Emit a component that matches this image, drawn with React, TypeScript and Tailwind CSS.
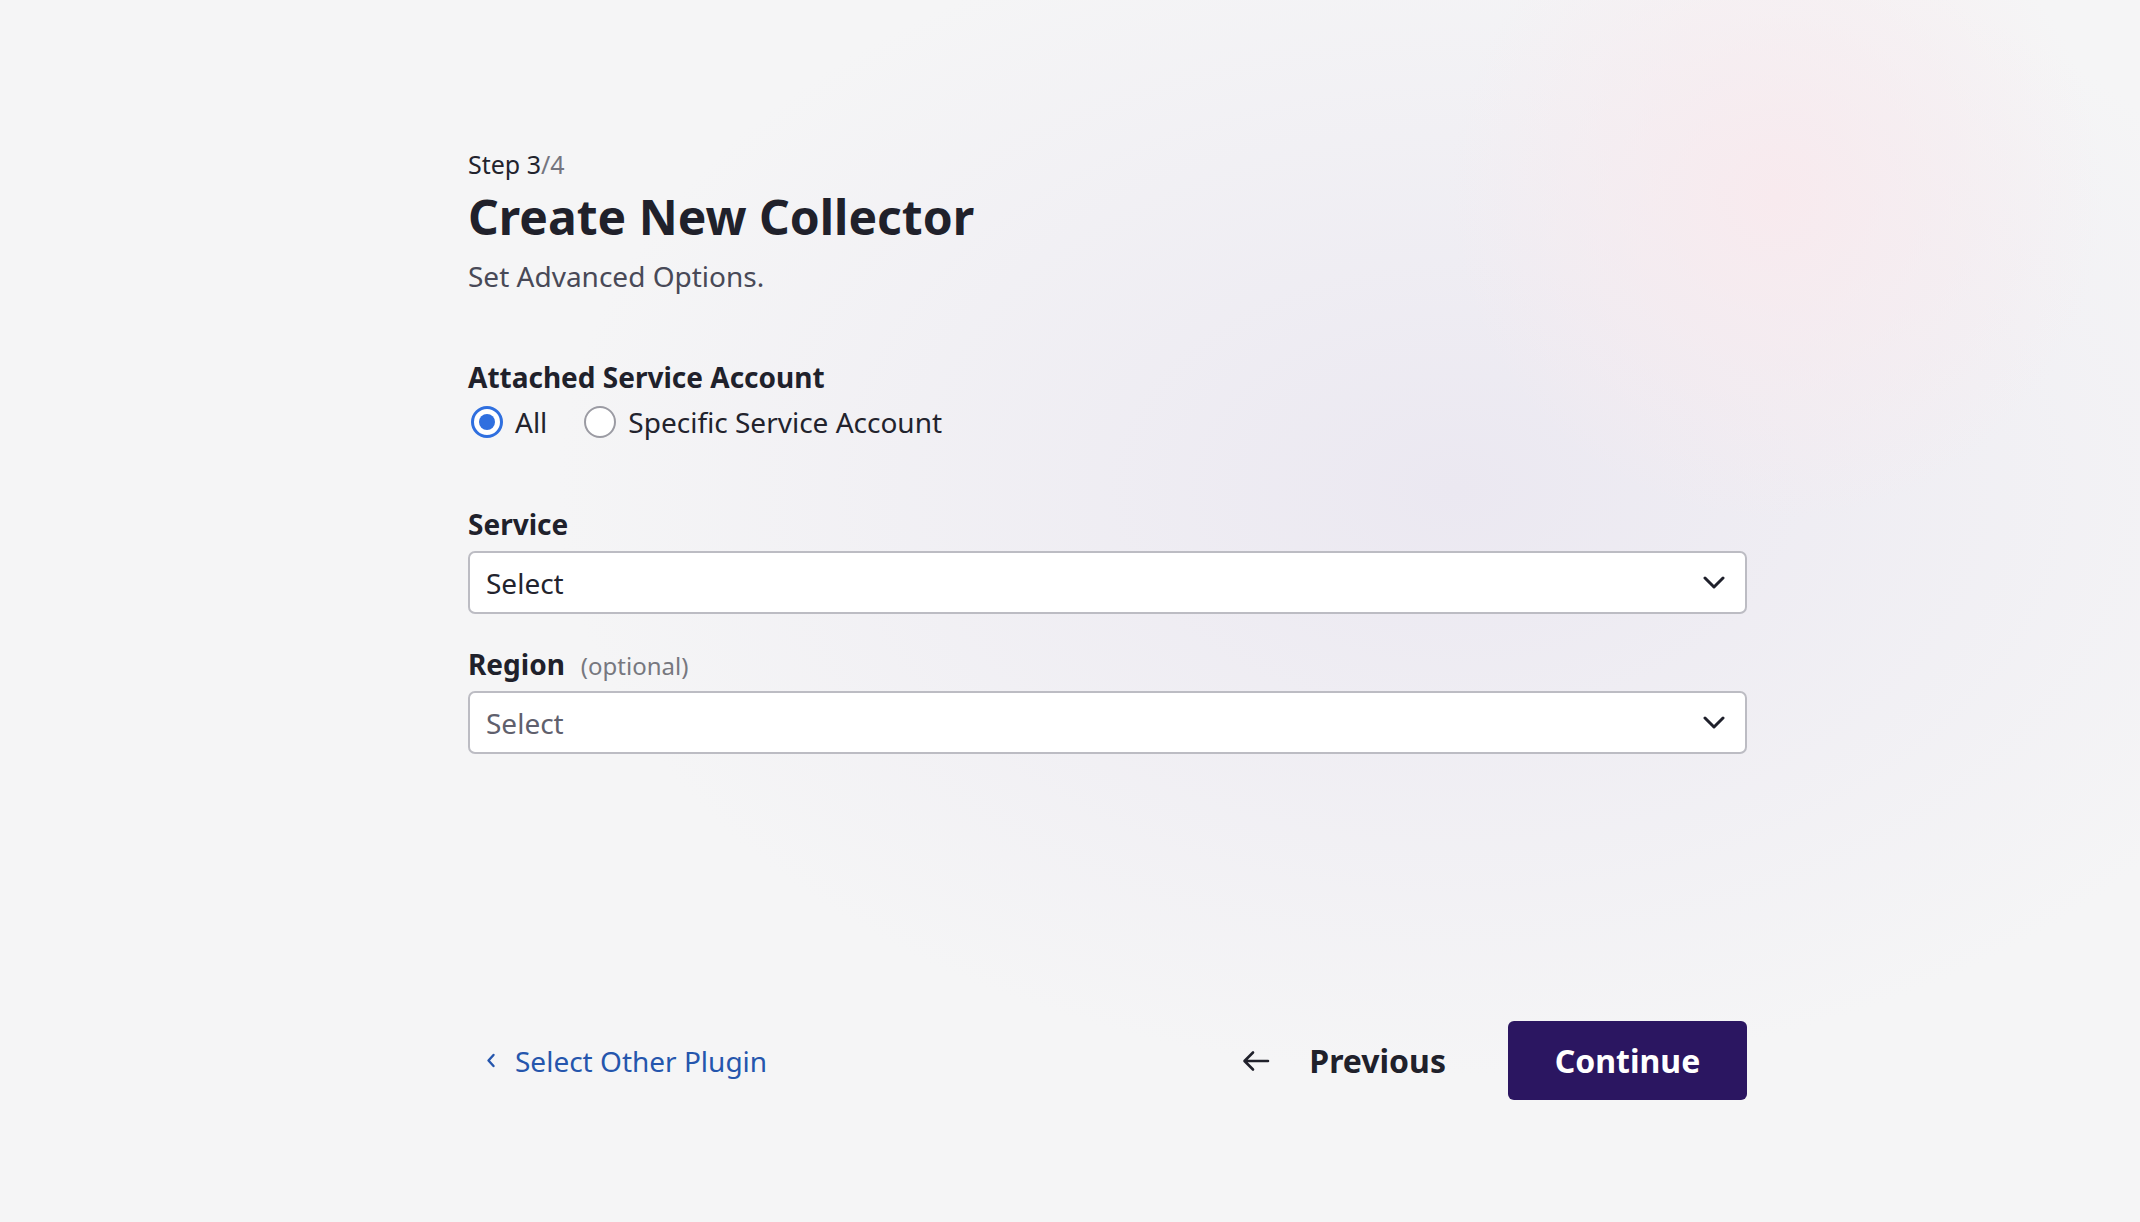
import { useState } from 'react'

const font = { fontFamily: '"Noto Sans", "Open Sans", sans-serif' }

function Chevron() {
  return (
    <svg width="22" height="13" viewBox="0 0 22 13" fill="none" className="shrink-0">
      <polyline
        points="2,2 11,11 20,2"
        stroke="#1f202b"
        strokeWidth="3"
        strokeLinecap="round"
        strokeLinejoin="round"
      />
    </svg>
  )
}

function SelectBox({ placeholderTone }: { placeholderTone: 'dark' | 'muted' }) {
  return (
    <button
      type="button"
      className="flex h-[63px] w-full items-center justify-between rounded-[7px] border-2 border-[#bcbcc3] bg-white pl-[16px] pr-[20px] text-left"
    >
      <span
        className={[
          'text-[28px] leading-none',
          placeholderTone === 'dark' ? 'text-[#22232d]' : 'text-[#5f606d]',
        ].join(' ')}
      >
        Select
      </span>
      <Chevron />
    </button>
  )
}

function Radio({
  checked,
  label,
  onClick,
}: {
  checked: boolean
  label: string
  onClick: () => void
}) {
  return (
    <button type="button" onClick={onClick} className="flex items-center gap-[12px]">
      {checked ? (
        <span className="flex h-[32px] w-[32px] items-center justify-center rounded-full border-[3px] border-[#2f6fdf] bg-white">
          <span className="h-[16px] w-[16px] rounded-full bg-[#2f6fdf]" />
        </span>
      ) : (
        <span className="h-[32px] w-[32px] rounded-full border-2 border-[#9b9ba3] bg-white" />
      )}
      <span className="text-[28px] leading-[40px] text-[#22232d]">{label}</span>
    </button>
  )
}

export default function App() {
  const [account, setAccount] = useState<'all' | 'specific'>('all')

  return (
    <div
      style={font}
      className="min-h-[1222px] w-full bg-[#f5f5f6] bg-[radial-gradient(circle_at_83%_16%,#f8eaee_0%,rgba(248,234,238,0)_16%),radial-gradient(ellipse_42%_48%_at_68%_40%,#ebe8f1_0%,rgba(245,245,246,0)_100%)]"
    >
      <div className="w-[1747px] pl-[468px] pt-[148px]">
        <p className="text-[25px] leading-[32px] text-[#22232d]">
          Step 3<span className="text-[#74757f]">/4</span>
        </p>
        <h1 className="mt-[7px] text-[48px] font-bold leading-[60px] text-[#20212b]">
          Create New Collector
        </h1>
        <p className="mt-[9px] text-[28px] leading-[40px] text-[#484957]">
          Set Advanced Options.
        </p>

        <section className="mt-[61px]">
          <h2 className="text-[28px] font-bold leading-[40px] text-[#20212b]">
            Attached Service Account
          </h2>
          <div className="mt-[5px] flex h-[40px] items-center gap-[37px] pl-[3px]">
            <Radio checked={account === 'all'} label="All" onClick={() => setAccount('all')} />
            <Radio
              checked={account === 'specific'}
              label="Specific Service Account"
              onClick={() => setAccount('specific')}
            />
          </div>
        </section>

        <section className="mt-[62px]">
          <label className="block text-[28px] font-bold leading-[40px] text-[#20212b]">
            Service
          </label>
          <div className="mt-[7px]">
            <SelectBox placeholderTone="dark" />
          </div>
        </section>

        <section className="mt-[30px]">
          <label className="flex items-baseline gap-[16px] text-[28px] font-bold leading-[40px] text-[#20212b]">
            Region
            <span className="text-[24px] font-normal text-[#77787f]">(optional)</span>
          </label>
          <div className="mt-[5px]">
            <SelectBox placeholderTone="muted" />
          </div>
        </section>

        <footer className="mt-[267px] flex h-[79px] items-center justify-between">
          <button type="button" className="flex items-center gap-[19px] pl-[18px] text-[#2556ad]">
            <svg width="10" height="15" viewBox="0 0 10 15" fill="none">
              <polyline
                points="7.5,2 2.5,7.5 7.5,13"
                stroke="#2556ad"
                strokeWidth="2.4"
                strokeLinecap="round"
                strokeLinejoin="round"
              />
            </svg>
            <span className="text-[28px] leading-none">Select Other Plugin</span>
          </button>

          <div className="flex items-center gap-[62px]">
            <button type="button" className="flex items-center gap-[39px] text-[#20212b]">
              <svg width="28" height="22" viewBox="0 0 28 22" fill="none">
                <path
                  d="M26 11H3M11 2.5L2.5 11L11 19.5"
                  stroke="#20212b"
                  strokeWidth="2.6"
                  strokeLinecap="round"
                  strokeLinejoin="round"
                />
              </svg>
              <span className="text-[32px] font-bold leading-none">Previous</span>
            </button>
            <button
              type="button"
              className="flex h-[79px] w-[239px] items-center justify-center rounded-[6px] bg-[#2b1661] text-[32px] font-bold text-white"
            >
              Continue
            </button>
          </div>
        </footer>
      </div>
    </div>
  )
}
